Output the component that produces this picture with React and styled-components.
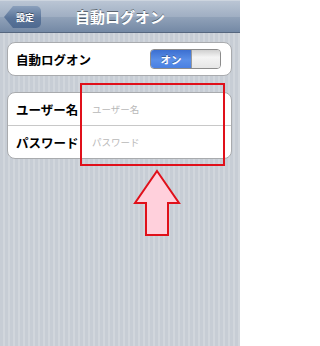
import React from "react";
import styled, { createGlobalStyle } from "styled-components";

const Global = createGlobalStyle`
  html, body { margin: 0; padding: 0; }
  body {
    width: 240px; height: 346px; overflow: hidden;
    font-family: "Noto Sans CJK JP", "Liberation Sans", sans-serif;
  }
`;

const Screen = styled.div`
  position: relative;
  width: 240px;
  height: 346px;
  background: repeating-linear-gradient(90deg, #c7cdd5 0 3px, #d1d6dc 3px 5px);
  display: flex;
  flex-direction: column;
`;

const NavBar = styled.div`
  position: relative;
  height: 33px;
  flex: none;
  background: linear-gradient(#bac5d4 0%, #a0afc3 50%, #91a2b9 51%, #7489a5 100%);
  border-bottom: 1px solid #56677f;
  border-top: 1px solid #cdd5df;
  box-sizing: border-box;
  display: flex;
  align-items: center;
  justify-content: center;
`;

const BackButton = styled.div`
  position: absolute;
  left: 4px;
  top: 5px;
  height: 22px;
  width: 37px;
  box-sizing: border-box;
  display: flex;
  align-items: center;
  justify-content: center;
  padding-left: 5px;
  font-size: 9px;
  font-weight: 700;
  color: #fff;
  text-shadow: 0 -1px 0 rgba(0,0,0,0.4);
  background: linear-gradient(#8ba0bc, #5a7499 55%, #4f6a90);
  border-radius: 5px;
  clip-path: polygon(9px 0, 100% 0, 100% 100%, 9px 100%, 0 50%);
`;

const Title = styled.div`
  font-size: 15px;
  font-weight: 700;
  color: #fff;
  text-shadow: 0 -1px 0 rgba(0,0,0,0.45);
  margin-top: -1px;
`;

const Content = styled.div`
  display: flex;
  flex-direction: column;
  gap: 16px;
  padding: 9px 8px 0 7px;
`;

const Group = styled.div`
  background: #fff;
  border: 1px solid #a9abae;
  border-radius: 8px;
  overflow: hidden;
`;

const Row = styled.div`
  height: 32px;
  display: flex;
  align-items: center;
  padding: 0 10px 0 8px;
  & + & { border-top: 1px solid #c8c8c8; }
`;

const Label = styled.div`
  font-size: 12.5px;
  font-weight: 700;
  color: #000;
  width: ${p => p.$w || "auto"};
  flex: ${p => (p.$w ? "none" : "1")};
  white-space: nowrap;
`;

const Placeholder = styled.div`
  font-size: 9.5px;
  color: #b8b8b8;
`;

const Switch = styled.div`
  width: 71px;
  height: 20px;
  box-sizing: border-box;
  border: 1px solid #8c8c8c;
  border-radius: 4px;
  overflow: hidden;
  display: flex;
`;

const SwitchOn = styled.div`
  width: 40px;
  background: linear-gradient(#3c6fd0, #5a8fe8 55%, #4a80e2);
  color: #fff;
  font-size: 10.5px;
  font-weight: 700;
  display: flex;
  align-items: center;
  justify-content: center;
  text-shadow: 0 -1px 0 rgba(0,0,0,0.3);
  border-right: 1px solid #9a9a9a;
`;

const SwitchThumb = styled.div`
  flex: 1;
  background: linear-gradient(#cfcfcf, #f4f4f4 40%, #e6e6e6);
`;

const Highlight = styled.div`
  position: absolute;
  left: 80px;
  top: 83px;
  width: 145px;
  height: 83px;
  box-sizing: border-box;
  border: 2px solid #e0101a;
`;

const Arrow = styled.svg`
  position: absolute;
  left: 132px;
  top: 169px;
`;

export default function App() {
  return (
    <>
      <Global />
      <Screen>
        <NavBar>
          <BackButton>設定</BackButton>
          <Title>自動ログオン</Title>
        </NavBar>
        <Content>
          <Group>
            <Row>
              <Label>自動ログオン</Label>
              <Switch>
                <SwitchOn>オン</SwitchOn>
                <SwitchThumb />
              </Switch>
            </Row>
          </Group>
          <Group>
            <Row>
              <Label $w="76px">ユーザー名</Label>
              <Placeholder>ユーザー名</Placeholder>
            </Row>
            <Row>
              <Label $w="76px">パスワード</Label>
              <Placeholder>パスワード</Placeholder>
            </Row>
          </Group>
        </Content>
        <Highlight />
        <Arrow width="50" height="70" viewBox="0 0 50 70">
          <polygon
            points="25,2 47,34 36,34 36,66 14,66 14,34 3,34"
            fill="#ffd0dc"
            stroke="#e0101a"
            strokeWidth="2"
            strokeLinejoin="miter"
          />
        </Arrow>
      </Screen>
    </>
  );
}
